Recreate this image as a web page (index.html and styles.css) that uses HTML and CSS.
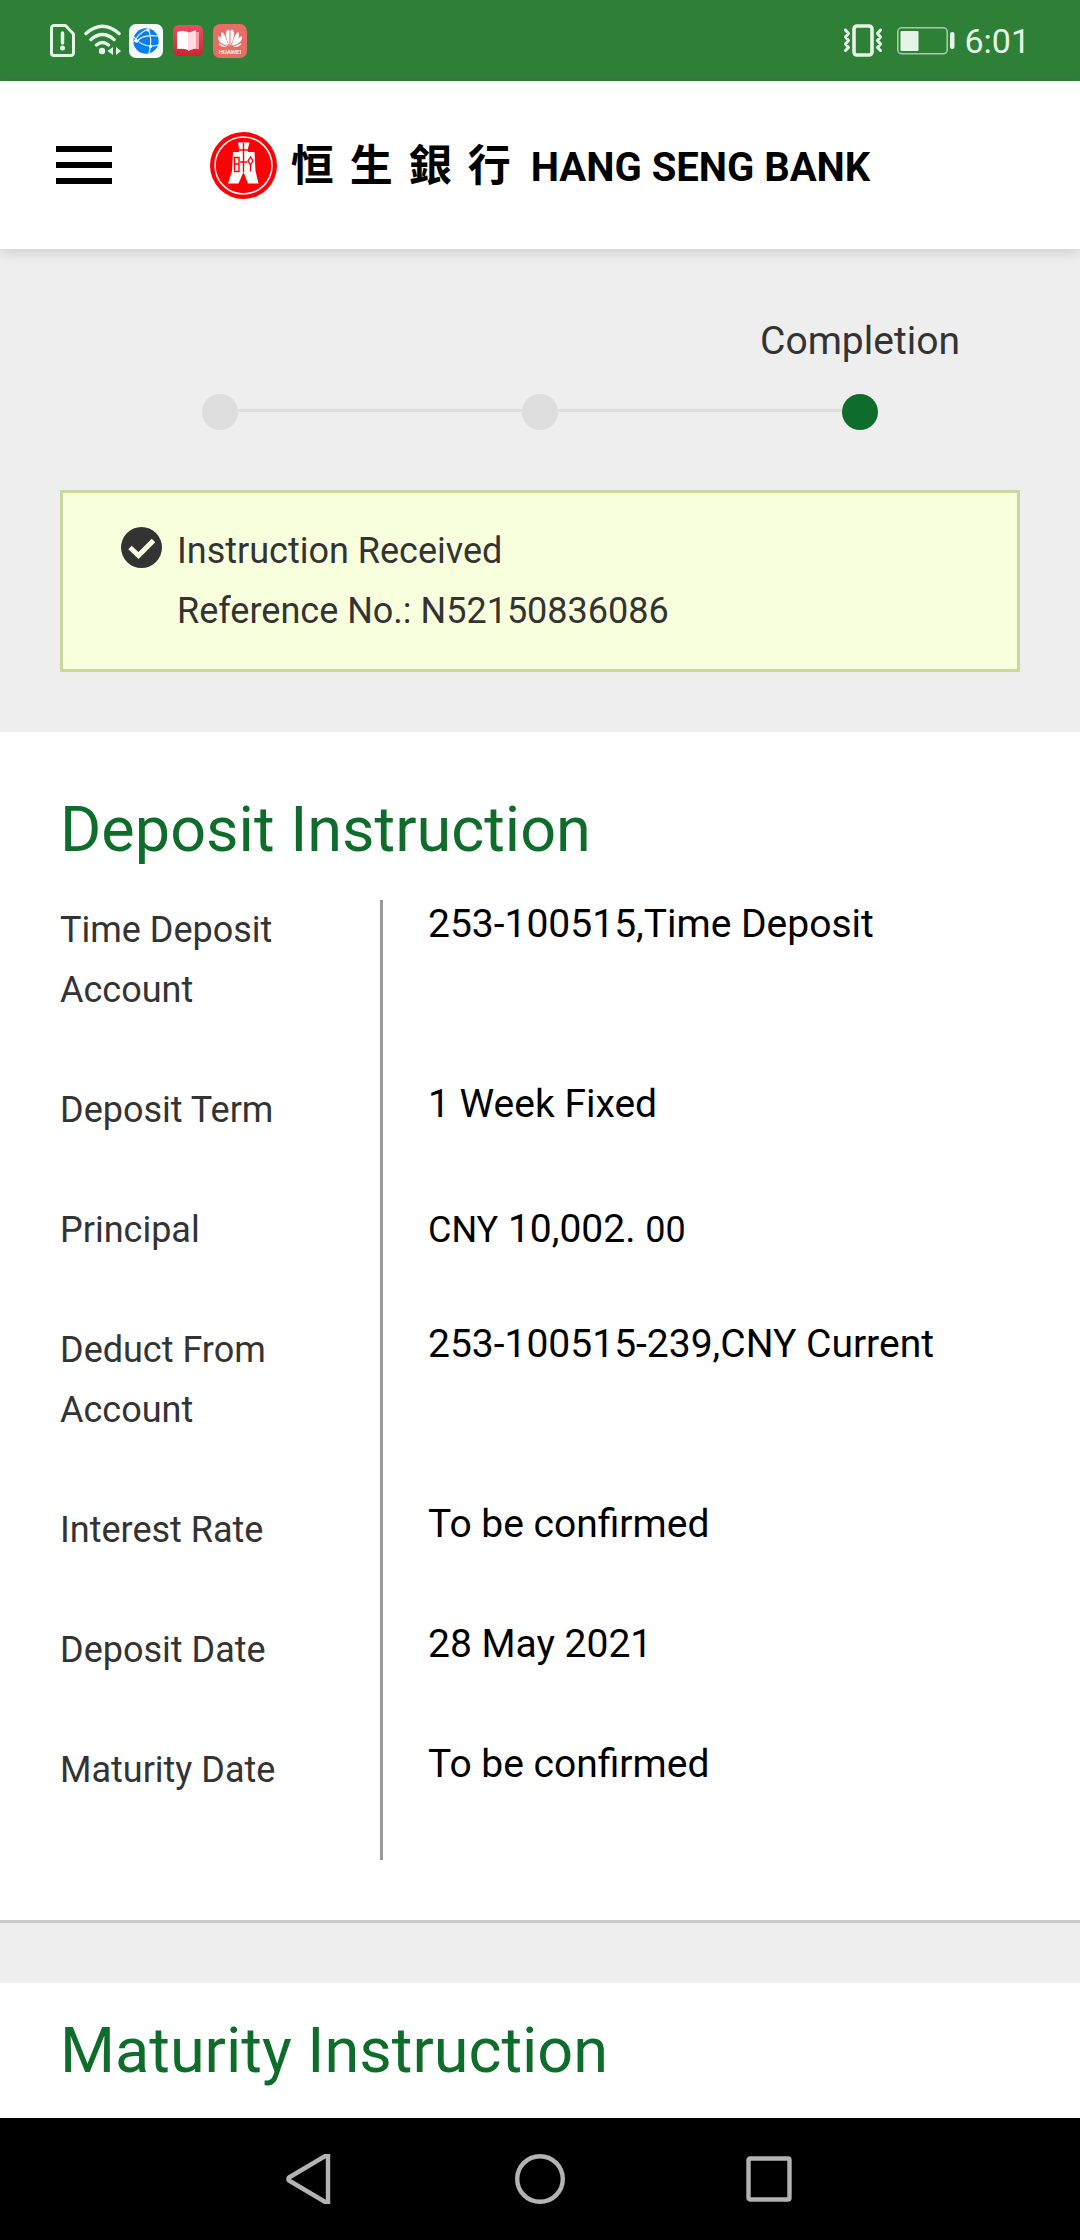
FILE: index.html
```html
<!DOCTYPE html>
<html lang="en">
<head>
<meta charset="utf-8">
<meta name="viewport" content="width=device-width">
<title>Hang Seng Bank - Deposit Instruction</title>
<link rel="stylesheet" href="styles.css">
</head>
<body>
<div class="status-bar">
  <div class="status-left">
    <svg width="25" height="33" viewBox="0 0 25 33" fill="none" stroke="#e6f3e7" stroke-width="3" stroke-linejoin="round"><path d="M4 1.500h11.500l8 8.500v19a2.500 2.500 0 0 1-2.500 2.500H4a2.500 2.500 0 0 1-2.500-2.500V4A2.500 2.500 0 0 1 4 1.500z"/><path d="M12.500 9v10" stroke-width="3.500" stroke-linecap="round"/><circle cx="12.500" cy="24" r="2.500" fill="#e6f3e7" stroke="none"/></svg>
    <svg class="wifi" width="37" height="33" viewBox="0 0 37 33" fill="none" stroke="#e6f3e7" stroke-width="3.500" stroke-linecap="round"><path d="M2 9.500Q18.500-5 35 9.500M7 15.500Q18.500 5.500 30 15.500M12.500 21Q18.500 16 24.500 21"/><circle cx="18" cy="27" r="3.200" fill="#e6f3e7" stroke="none"/><path d="M29 23v8l-5.500-4zM32 23v8l5-4z" fill="#e6f3e7" stroke="none"/></svg>
    <svg class="browser" width="34" height="34" viewBox="0 0 34 34"><rect width="34" height="34" rx="7" fill="#f7fbff"/><circle cx="17" cy="17" r="12.700" fill="#087fec"/><g fill="none" stroke="#f7fbff" stroke-width="1.100"><path d="M19 4.500Q24 15 20 29.500M19 5Q10 9 4.500 18M5 13Q14 25 29.500 21M8 18Q12 10 29 12"/></g><g fill="#f7fbff"><circle cx="19" cy="6" r="1.600"/><circle cx="7.500" cy="17" r="1.800"/><circle cx="21.500" cy="22.500" r="1.600"/></g></svg>
    <svg class="book" width="30" height="31" viewBox="0 0 30 31"><defs><linearGradient id="book-red" x2="0" y2="1"><stop stop-color="#e65263"/><stop offset="1" stop-color="#cb2430"/></linearGradient></defs><rect width="30" height="31" rx="6" fill="url(#book-red)"/><path d="M15 7h11v17H15z" fill="#f49aa3"/><path d="M4 7q6-2 11 0v18q-5-2-11-1z" fill="#fff"/><path d="M15 8l8-3v18l-8 3z" fill="#ffdce1"/></svg>
    <svg width="34" height="34" viewBox="0 0 34 34"><rect width="34" height="34" rx="7" fill="#e66e67"/><g fill="#fff"><path d="M16.500 22Q11 10 14 6q2-1 2.500 1z"/><path d="M17.500 22Q23 10 20 6q-2-1-2.500 1zM15.500 22Q5 13 9 8q3 1 6.500 14zM18.500 22Q29 13 25 8q-3 1-6.500 14zM14.500 22Q3 18 5.500 12q3 1 9 10zM19.500 22Q31 18 28.500 12q-3 1-9 10zM14 23q-8 0-8.500-4zM20 23q8 0 8.500-4z"/><text x="17" y="30" font-family="Roboto, sans-serif" font-size="6" text-anchor="middle" font-weight="500">HUAWEI</text></g></svg>
  </div>
  <div class="status-right">
    <svg width="40" height="33" viewBox="0 0 40 33" fill="none" stroke="#e6f3e7" stroke-width="3" stroke-linecap="round" stroke-linejoin="round"><rect x="11" y="2" width="18" height="29" rx="3" stroke-width="3.600"/><path d="M2.500 6l3 3.500-3 3.500 3 3.500-3 3.500 3 3.500-3 3M37.500 6l-3 3.500 3 3.500-3 3.500 3 3.500-3 3.500 3 3"/></svg>
    <svg class="battery" width="58" height="28" viewBox="0 0 58 28"><rect x=".8" y=".8" width="49.400" height="26" rx="4" fill="none" stroke="#a3cba7" stroke-width="1.600"/><rect x="3.500" y="4" width="18" height="20" rx="1" fill="#e6f3e7"/><rect x="53" y="5" width="4.500" height="17" rx="2" fill="#e6f3e7"/></svg>
    <span class="clock">6:01</span>
  </div>
</div>

<header class="site-header">
  <button class="menu" type="button" aria-label="Menu"><span></span><span></span><span></span></button>
  <a class="brand" href="#">
    <svg class="emblem" width="67" height="67" viewBox="0 0 67 67"><circle cx="33.500" cy="33.500" r="33.500" fill="#fb0207"/><circle cx="33.500" cy="33.500" r="28.500" fill="none" stroke="#fff" stroke-width="1.500"/><path d="M28 10.500h11.500l-1.500 6v3.500h6.500L45.500 39l3 12.500H38L33.500 40l-5 11.500H18l4-12.500 1-19h6v-3.500z" fill="#fff"/><g fill="none" stroke="#fb0207" stroke-width="1.400"><path d="M33.500 11v29M28.500 18h10M30 30h7M24.500 25.500h4.500v14h-4.500zM24.500 32h4.500M40.500 33v6.500"/><path d="M40.500 25l2.500 4-2.500 4-2.500-4z"/></g></svg>
    <span class="brand-zh" lang="zh-Hant"><span>恒</span><span>生</span><span>銀</span><span>行</span></span>
    <span class="brand-en">HANG SENG BANK</span>
  </a>
</header>

<main>
  <section class="summary">
    <ol class="steps">
      <li class="step"></li>
      <li class="step"></li>
      <li class="step current" aria-current="step">Completion</li>
    </ol>
    <div class="notice" role="status">
      <svg class="notice-icon" width="41" height="41" viewBox="0 0 41 41"><circle cx="20.500" cy="20.500" r="20.500" fill="#333"/><path d="M9 20.500l8.500 8L32.500 13.500" fill="none" stroke="#f8ffdc" stroke-width="5"/></svg>
      <p class="notice-text">Instruction Received<br>Reference No.: N52150836086</p>
    </div>
  </section>

  <section class="panel deposit">
    <h2>Deposit Instruction</h2>
    <dl class="details">
      <div class="row"><dt>Time Deposit Account</dt><dd>253-100515,Time Deposit</dd></div>
      <div class="row"><dt>Deposit Term</dt><dd>1 Week Fixed</dd></div>
      <div class="row"><dt>Principal</dt><dd class="amount"><small>CNY</small> 10,002. <small>00</small></dd></div>
      <div class="row"><dt>Deduct From Account</dt><dd>253-100515-239,CNY Current</dd></div>
      <div class="row"><dt>Interest Rate</dt><dd>To be confirmed</dd></div>
      <div class="row"><dt>Deposit Date</dt><dd>28 May 2021</dd></div>
      <div class="row"><dt>Maturity Date</dt><dd>To be confirmed</dd></div>
    </dl>
  </section>

  <section class="panel maturity">
    <h2>Maturity Instruction</h2>
  </section>
</main>

<nav class="system-nav" aria-label="System">
  <button type="button" aria-label="Back"><svg width="50" height="50" viewBox="0 0 50 50"><path d="M42 2.500v45a1 1 0 0 1-2 1L3 26.500a2 2 0 0 1 0-3L40 1.500a1 1 0 0 1 2 1z"/></svg></button>
  <button type="button" aria-label="Home"><svg width="50" height="50" viewBox="0 0 50 50"><circle cx="25" cy="25" r="22.800"/></svg></button>
  <button type="button" aria-label="Recent apps"><svg width="50" height="50" viewBox="0 0 50 50"><rect x="4.500" y="4.500" width="41" height="41" rx="1.500"/></svg></button>
</nav>
</body>
</html>
```
FILE: styles.css
```css
* {
  box-sizing: border-box;
}

body {
  display: flex;
  flex-direction: column;
  min-height: 100vh;
  margin: 0;
  background: #fff;
  color: #333;
  font: 36px/60px Roboto, "Noto Sans CJK TC", sans-serif;
}

svg {
  display: block;
  flex: none;
}

button {
  padding: 0;
  border: 0;
  background: none;
}

/* Status bar */
.status-bar {
  display: flex;
  justify-content: space-between;
  height: 81px;
  padding: 0 50px;
  background: #2e8037;
  color: #e6f3e7;
}

.status-left,
.status-right {
  display: flex;
  align-items: center;
}

.wifi {
  margin: 0 8px 0 9px;
}

.book {
  margin: 0 10px;
}

.battery {
  margin: 0 9px 0 14px;
}

.clock {
  font-size: 34px;
}

/* Header */
.site-header {
  position: relative;
  display: grid;
  grid-template-columns: 1fr auto 1fr;
  align-items: center;
  height: 168px;
  padding: 0 56px;
  background: #fff;
  box-shadow: 0 3px 12px rgba(0, 0, 0, .15);
}

.menu {
  display: flex;
  flex-direction: column;
  gap: 10px;
  width: 56px;
}

.menu span {
  height: 6px;
  background: #000;
}

.brand {
  display: flex;
  align-items: center;
  color: #000;
  text-decoration: none;
}

.brand-zh {
  display: flex;
  gap: 16px;
  margin: 0 20px 0 14px;
  padding-bottom: 6px;
  font: bold 43px/60px "Noto Sans CJK TC", sans-serif;
}

.brand-en {
  padding-top: 6px;
  font-size: 40px;
  font-weight: 700;
}

/* Progress and notice */
.summary {
  padding: 60px;
  background: #eee;
}

.steps {
  display: grid;
  grid-template-columns: repeat(3, 1fr);
  align-items: end;
  margin: 0 0 60px;
  padding: 0;
  list-style: none;
  font-size: 39px;
  line-height: 64px;
  text-align: center;
}

.step {
  position: relative;
}

.step::after {
  content: "";
  display: block;
  width: 36px;
  height: 36px;
  margin: 21px auto 0;
  border-radius: 50%;
  background: #ddd;
}

.step + .step::before {
  content: "";
  position: absolute;
  right: calc(50% + 18px);
  bottom: 18px;
  width: calc(100% - 36px);
  height: 3px;
  background: #ddd;
}

.step.current::after {
  background: #0f6d2b;
}

.notice {
  display: flex;
  align-items: flex-start;
  gap: 15px;
  padding: 28px 58px;
  border: 3px solid #c9d89e;
  background: #f8ffdc;
}

.notice-icon {
  margin-top: 6px;
}

.notice-text {
  margin: 0;
}

/* Panels */
main {
  flex: 1;
}

.panel {
  padding: 60px;
}

.deposit {
  border-bottom: 3px solid #c9c9c9;
}

.maturity {
  padding-top: 30px;
  padding-bottom: 30px;
  border-top: 60px solid #eee;
}

h2 {
  margin: 0;
  color: #0f6d2b;
  font-size: 63px;
  font-weight: 400;
  line-height: 75px;
}

.details {
  margin: 33px 0 0;
}

.row {
  display: grid;
  grid-template-columns: 1fr 2fr;
}

dt {
  padding: 0 20px 60px 0;
}

dd {
  margin: 0;
  padding-left: 45px;
  border-left: 3px solid #999;
  color: #000;
  font-size: 39px;
  line-height: 49px;
}

.amount {
  line-height: 59px;
}

small {
  font-size: 36px;
}

/* System navigation */
.system-nav {
  display: flex;
  justify-content: center;
  height: 122px;
  background: #000;
}

.system-nav button {
  display: flex;
  align-items: center;
  justify-content: center;
  width: 229px;
}

.system-nav svg {
  fill: none;
  stroke: #b3b3b3;
  stroke-width: 4.4;
  stroke-linejoin: round;
}
```
